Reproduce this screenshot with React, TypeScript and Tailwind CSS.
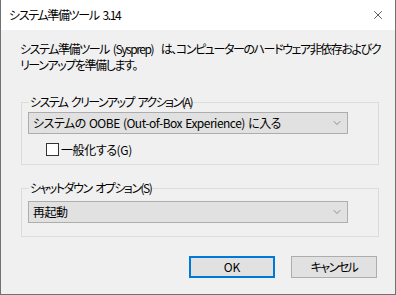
import { X, ChevronDown } from "lucide-react"

const FONT = "[font-family:'Noto_Sans_CJK_JP','Liberation_Sans',sans-serif]"

function Combo({ value }: { value: string }) {
  return (
    <div className="flex h-[22px] w-[320px] items-center justify-between border border-[#adadad] bg-[#e1e1e1] pl-[4px] pr-[4px]">
      <span className="whitespace-nowrap text-[12px] leading-none tracking-[-0.5px] [word-spacing:1px] text-black">
        {value}
      </span>
      <ChevronDown size={12} strokeWidth={1.2} className="text-[#555]" />
    </div>
  )
}

function Group({ label, tight, children, last }: { label: string; tight: string; children: React.ReactNode; last?: boolean }) {
  return (
    <fieldset
      className={`mx-[20px] w-[358px] border border-[#dcdcdc] px-[6px] ${last ? "pb-[13px]" : "pb-[8px]"}`}
    >
      <legend className={`ml-[1px] px-[1px] text-[12px] leading-[14px] [word-spacing:2.5px] text-black ${tight}`}>
        {label}
      </legend>
      {children}
    </fieldset>
  )
}

export default function App() {
  return (
    <div
      className={`${FONT} flex h-[295px] w-[396px] flex-col border-x border-b border-[#717171] bg-[#f0f0f0] text-black [font-feature-settings:'palt']`}
    >
      <div className="flex h-[30px] shrink-0 items-center justify-between bg-white pl-[8px] pr-[10px]">
        <span className="text-[12px] leading-none tracking-[-1.35px] [word-spacing:2.5px]">システム準備ツール 3.14</span>
        <X size={14} strokeWidth={1.1} className="text-black" />
      </div>

      <div className="px-[19px] pt-[11px] text-[12px] leading-[16px] tracking-[-1.42px] [word-spacing:2.5px]">
        <div className="whitespace-nowrap">
          システム準備ツール (Sysprep)&nbsp; は、コンピューターのハードウェア非依存およびク
        </div>
        <div className="whitespace-nowrap">リーンアップを準備します。</div>
      </div>

      <div className="mt-[22px]">
        <Group label="システム クリーンアップ アクション(A)" tight="tracking-[-1.6px]">
          <div className="mt-[3px]">
            <Combo value="システムの OOBE (Out-of-Box Experience) に入る" />
          </div>
          <label className="mt-[9px] flex items-center gap-[2px] pl-[18px]">
            <span className="h-[13px] w-[13px] border border-[#333] bg-white" />
            <span className="text-[12px] leading-none tracking-[-0.4px]">一般化する(G)</span>
          </label>
        </Group>
      </div>

      <div className="mt-[16px]">
        <Group label="シャットダウン オプション(S)" tight="tracking-[-1.5px]" last>
          <div className="mt-[6px]">
            <Combo value="再起動" />
          </div>
        </Group>
      </div>

      <div className="mt-[19px] flex justify-end gap-[16px] pr-[18px]">
        <button className="flex h-[22px] w-[86px] items-center justify-center border-2 border-[#0078d7] bg-[#e1e1e1] text-[12px] leading-none">
          OK
        </button>
        <button className="flex h-[22px] w-[86px] items-center justify-center border border-[#adadad] bg-[#e1e1e1] text-[12px] leading-none tracking-[-1.5px]">
          キャンセル
        </button>
      </div>
    </div>
  )
}
